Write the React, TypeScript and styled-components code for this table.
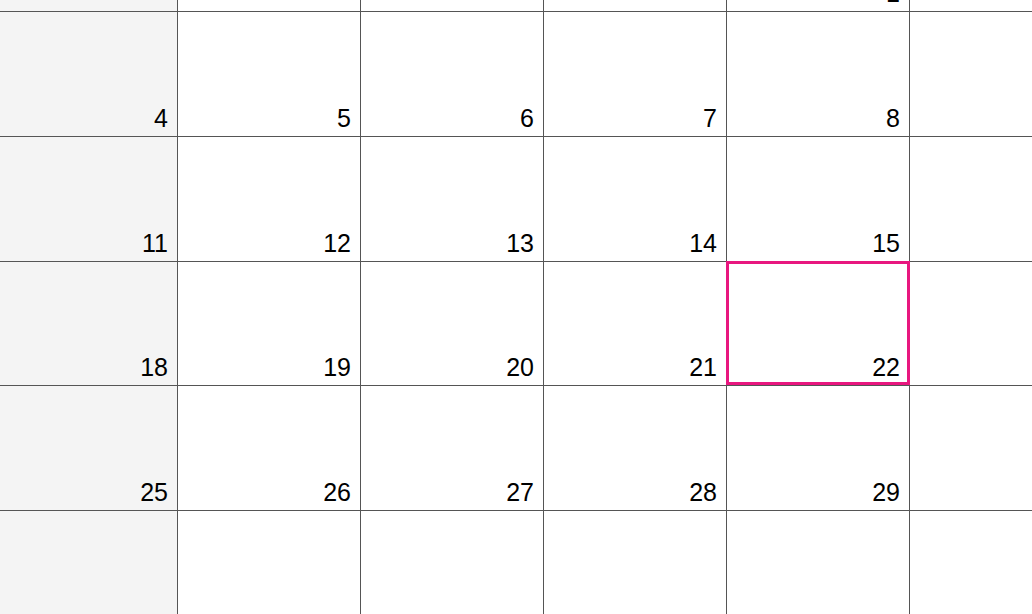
import React from "react";
import styled, { createGlobalStyle } from "styled-components";

const GlobalStyle = createGlobalStyle`
  html, body {
    margin: 0;
    padding: 0;
    background: #ffffff;
    overflow: hidden;
  }
  body {
    font-family: "Liberation Sans", Arial, sans-serif;
  }
`;

const Month = styled.div`
  display: grid;
  grid-template-columns: repeat(7, 183px);
  grid-template-rows: 125px 125px 125px 124px 125px 125px;
  margin: -113px 0 0 -5px;
  width: max-content;
`;

const Cell = styled.div<{ $weekend: boolean }>`
  position: relative;
  box-sizing: border-box;
  display: flex;
  align-items: flex-end;
  justify-content: flex-end;
  padding: 0 9px 3px 0;
  border-right: 1px solid #555555;
  border-bottom: 1px solid #555555;
  background: ${(p) => (p.$weekend ? "#f4f4f4" : "#ffffff")};
`;

const DayNumber = styled.span`
  font-size: 25px;
  color: #000000;
`;

const Selection = styled.div`
  position: absolute;
  top: -1px;
  left: -1px;
  right: -1px;
  bottom: 0;
  border: 3px solid #e8177f;
  pointer-events: none;
  z-index: 2;
`;

const firstOffset = 4; // month starts on Thursday
const daysInMonth = 31;
const selected = 22;

export default function App() {
  const cells = Array.from({ length: 42 }, (_, i) => {
    const day = i - firstOffset + 1;
    return day >= 1 && day <= daysInMonth ? day : null;
  });
  return (
    <>
      <GlobalStyle />
      <Month>
        {cells.map((day, i) => {
          const col = i % 7;
          return (
            <Cell key={i} $weekend={col === 0 || col === 6}>
              {day !== null && <DayNumber>{day}</DayNumber>}
              {day === selected && <Selection />}
            </Cell>
          );
        })}
      </Month>
    </>
  );
}
